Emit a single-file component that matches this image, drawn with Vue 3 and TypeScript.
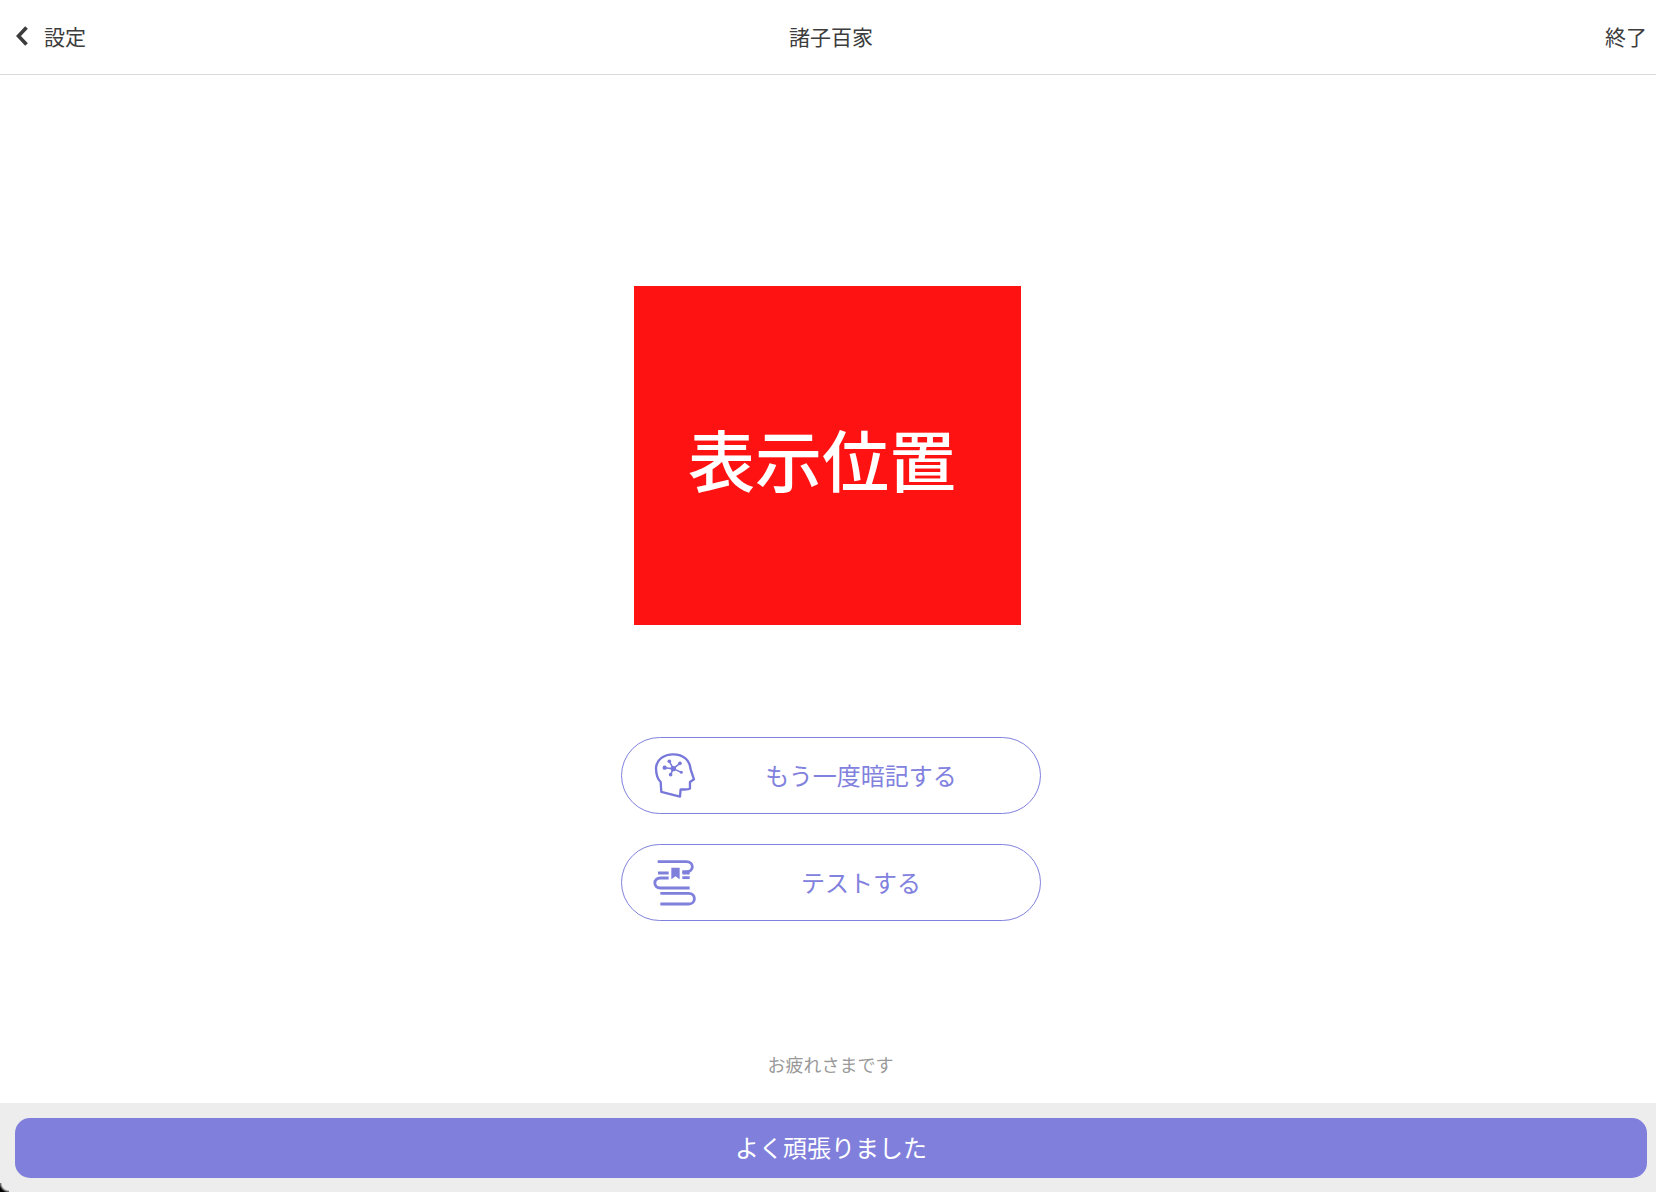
<script setup lang="ts">
const actions = [
  { label: 'もう一度暗記する', icon: 'head' },
  { label: 'テストする', icon: 'books' },
]
</script>

<template>
  <div class="page">
    <header class="top">
      <div class="back">
        <svg class="chev" viewBox="0 0 14 22" width="14" height="22"><path d="M11.5 2.500 L3.500 11 L11.500 19.500" fill="none" stroke="#3c3c3c" stroke-width="3.6"/></svg>
        <span>設定</span>
      </div>
      <div class="title">諸子百家</div>
      <div class="end">終了</div>
    </header>
    <main class="main">
      <div class="card"><span class="card-text">表示位置</span></div>
      <div class="actions">
        <button v-for="a in actions" :key="a.label" class="act">
          <svg v-if="a.icon === 'head'" class="ico head" viewBox="130 80 130 145" width="43.3" height="48.3" fill="none" stroke="#7878da" stroke-width="7">
            <path d="M152 200 L150 170 C140 160 136 145 136 128 C138 102 160 87 188 87 C218 87 238 105 240 132 L250 162 L238 170 L238 190 C232 194 222 193 210 192 L208 214 Z" stroke-linejoin="round"/>
            <path d="M188 130 L176 108 M188 130 L208 114 M188 130 L162 127 M188 130 L180 148 M188 130 L212 141" stroke-width="4.500"/>
            <g fill="#7878da" stroke="none">
              <circle cx="188" cy="130" r="8"/><circle cx="176" cy="108" r="5.500"/><circle cx="208" cy="114" r="5.500"/>
              <circle cx="162" cy="127" r="6.500"/><circle cx="180" cy="148" r="5.500"/><circle cx="212" cy="141" r="4.500"/>
            </g>
          </svg>
          <svg v-else class="ico books" viewBox="125 70 135 145" width="45" height="48.3" fill="none" stroke="#7f7fdc" stroke-width="8.500">
            <path d="M142 78 H228 C252 78 252 108 228 108 H216"/>
            <path d="M143 112 H175 M216 112 H238"/>
            <path d="M175 127 H150 C128 127 128 157 150 157 H238"/>
            <path d="M216 126 H238"/>
            <path d="M183 96 H208 V131 L195.500 122 L183 131 Z" fill="#7f7fdc" stroke="none"/>
            <path d="M150 173 H235 C258 173 258 205 235 205 H150"/>
          </svg>
          <span class="lbl">{{ a.label }}</span>
        </button>
      </div>
    </main>
    <div class="thanks">お疲れさまです</div>
    <footer class="foot">
      <button class="done">よく頑張りました</button>
    </footer>
    <div class="corner"></div>
  </div>
</template>

<style>
body { margin: 0; background: #fff; }
</style>

<style scoped>
.page {
  position: relative;
  width: 1656px;
  height: 1192px;
  display: flex;
  flex-direction: column;
  font-family: "Noto Sans CJK JP", "Noto Sans", sans-serif;
  color: #3c3c3c;
  overflow: hidden;
}
.top {
  height: 75px;
  box-sizing: border-box;
  flex: none;
  border-bottom: 1px solid #d9d9d9;
  display: grid;
  grid-template-columns: 1fr auto 1fr;
  align-items: center;
  padding: 0 9px 2px 15px;
  font-size: 21px;
}
.back { display: flex; align-items: center; gap: 15px; }
.end { text-align: right; }
.main {
  flex: 1;
  display: flex;
  flex-direction: column;
  align-items: center;
  padding-top: 211px;
}
.card {
  width: 387px;
  height: 339px;
  margin-right: 1px;
  background: #ff1212;
  color: #fff;
  font-size: 67px;
  font-weight: 500;
  display: flex;
  align-items: center;
  justify-content: center;
  padding: 4px 11px 0 0;
  box-sizing: border-box;
}
.actions {
  margin-top: 112px;
  margin-left: 6px;
  display: flex;
  flex-direction: column;
  gap: 30px;
}
.act {
  position: relative;
  width: 420px;
  height: 77px;
  border: 1px solid #8181de;
  border-radius: 39px;
  background: #fff;
  color: #8181de;
  font: inherit;
  font-size: 24px;
  display: flex;
  align-items: center;
  justify-content: center;
  padding: 0 0 2px 60px;
  box-sizing: border-box;
}
.ico { position: absolute; }
.head { left: 32px; top: 14px; }
.books { left: 30px; top: 14px; }
.thanks {
  text-align: center;
  font-size: 18px;
  color: #999;
  margin-bottom: 26px;
  padding-left: 5px;
}
.foot {
  height: 89px;
  flex: none;
  background: #ededed;
  padding: 15px 9px 14px 15px;
  box-sizing: border-box;
}
.done {
  width: 100%;
  height: 60px;
  border: 0;
  border-radius: 15px;
  background: #8080dc;
  color: #fff;
  font: inherit;
  font-size: 24px;
  padding: 0 0 3px;
}
.corner {
  position: absolute;
  left: 0;
  bottom: 0;
  width: 9px;
  height: 9px;
  background: radial-gradient(circle at 100% 0, transparent 7px, #000 10px);
}
</style>
